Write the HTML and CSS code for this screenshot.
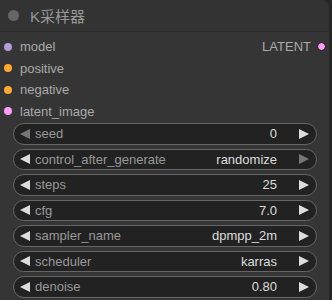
FILE: index.html
```html
<!DOCTYPE html>
<html lang="zh">
  <head>
    <meta charset="UTF-8" />
    <title>K采样器</title>
    <link rel="stylesheet" href="styles.css">
  </head>
  <body>
    <div class="node">
      <div class="title">
        <span class="title-dot"></span>
        <span class="title-text">K采样器</span>
      </div>
      <div class="slots">
        <div class="slot-row">
          <div class="slot"><span class="dot model"></span>model</div>
          <div class="slot out">LATENT<span class="dot latent ring"></span></div>
        </div>
        <div class="slot-row">
          <div class="slot"><span class="dot cond"></span>positive</div>
        </div>
        <div class="slot-row">
          <div class="slot"><span class="dot cond"></span>negative</div>
        </div>
        <div class="slot-row">
          <div class="slot"><span class="dot latent"></span>latent_image</div>
        </div>
      </div>
      <div class="widgets">
        <div class="widget">
          <span class="arrow left dim"></span>
          <span class="label">seed</span>
          <span class="value">0</span>
          <span class="arrow right"></span>
        </div>
        <div class="widget">
          <span class="arrow left"></span>
          <span class="label">control_after_generate</span>
          <span class="value">randomize</span>
          <span class="arrow right dim"></span>
        </div>
        <div class="widget">
          <span class="arrow left"></span>
          <span class="label">steps</span>
          <span class="value">25</span>
          <span class="arrow right"></span>
        </div>
        <div class="widget">
          <span class="arrow left"></span>
          <span class="label">cfg</span>
          <span class="value">7.0</span>
          <span class="arrow right"></span>
        </div>
        <div class="widget">
          <span class="arrow left"></span>
          <span class="label">sampler_name</span>
          <span class="value">dpmpp_2m</span>
          <span class="arrow right"></span>
        </div>
        <div class="widget">
          <span class="arrow left"></span>
          <span class="label">scheduler</span>
          <span class="value">karras</span>
          <span class="arrow right"></span>
        </div>
        <div class="widget">
          <span class="arrow left"></span>
          <span class="label">denoise</span>
          <span class="value">0.80</span>
          <span class="arrow right"></span>
        </div>
      </div>
    </div>
  </body>
</html>
```

FILE: styles.css
```css
body {
  margin: 0;
  background-color: #262626;
  font-family: "Liberation Sans", Arial, "Noto Sans CJK SC", sans-serif;
  overflow: hidden;
}
.node {
  width: 329px;
  height: 300px;
  background-color: #353535;
  border-radius: 0 8px 0 0;
}
.title {
  display: flex;
  align-items: center;
  height: 31px;
  background-color: #333;
  border-bottom: 1px solid #2a2a2a;
  border-radius: 0 8px 0 0;
}
.title-dot {
  width: 11px;
  height: 11px;
  border-radius: 50%;
  background-color: #666;
  margin-left: 8px;
}
.title-text {
  color: #999;
  font-size: 15px;
  margin-left: 11px;
}
.slots {
  padding-top: 4px;
}
.slot-row {
  display: flex;
  justify-content: space-between;
  align-items: center;
  height: 21.5px;
}
.slot {
  display: flex;
  align-items: center;
  color: #aaa;
  font-size: 13px;
}
.dot {
  width: 8px;
  height: 8px;
  border-radius: 50%;
  margin: 0 8px 0 4px;
}
.out .dot {
  margin: 0 3px 0 6px;
}
.model {
  background-color: #b39ddb;
}
.cond {
  background-color: #ffa931;
}
.latent {
  background-color: #ff9cf9;
}
.ring {
  box-sizing: border-box;
  border: 1px solid #111;
  width: 9px;
  height: 9px;
}
.widgets {
  display: flex;
  flex-direction: column;
  gap: 4px;
  padding: 1px 12px 0 13px;
}
.widget {
  display: flex;
  align-items: center;
  box-sizing: border-box;
  height: 21.5px;
  background-color: #222;
  border: 1px solid #666;
  border-radius: 11px;
  font-size: 13px;
}
.label {
  color: #999;
  margin-left: 5px;
  flex: 1;
}
.value {
  color: #ddd;
  margin-right: 22px;
}
.arrow {
  width: 0;
  height: 0;
  border-top: 5.5px solid transparent;
  border-bottom: 5.5px solid transparent;
}
.arrow.left {
  border-right: 10px solid #ddd;
  margin-left: 6px;
}
.arrow.right {
  border-left: 10px solid #ddd;
  margin-right: 7px;
}
.arrow.left.dim {
  border-right-color: #777;
}
.arrow.right.dim {
  border-left-color: #777;
}
```
